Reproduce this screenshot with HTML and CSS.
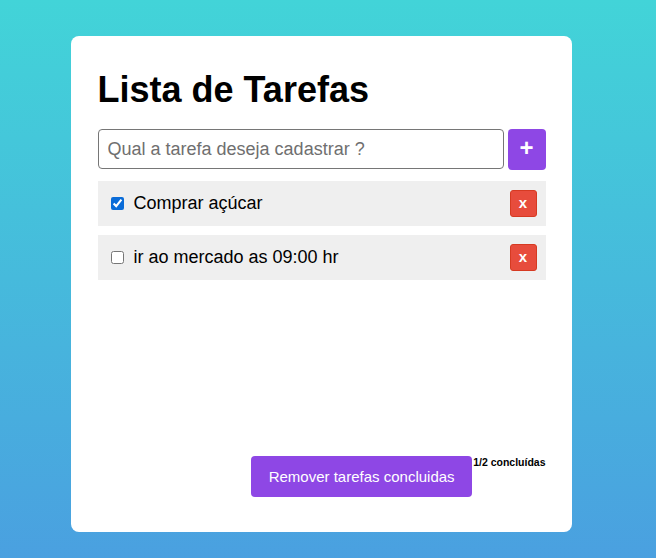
FILE: index.html
```html
<!DOCTYPE html>
<html lang="pt-BR">
<head>
<meta charset="utf-8">
<title>Lista de Tarefas</title>
<link rel="stylesheet" href="styles.css">
</head>
<body>
<main class="card">
  <h1 class="title">Lista de Tarefas</h1>
  <form class="new-task">
    <input class="task-input" type="text" placeholder="Qual a tarefa deseja cadastrar ?">
    <button class="add-btn" type="button">+</button>
  </form>
  <ul class="tasks">
    <li class="task">
      <label class="task-label"><input type="checkbox" class="task-check" checked><span>Comprar açúcar</span></label>
      <button class="del-btn" type="button">x</button>
    </li>
    <li class="task">
      <label class="task-label"><input type="checkbox" class="task-check"><span>ir ao mercado as 09:00 hr</span></label>
      <button class="del-btn" type="button">x</button>
    </li>
  </ul>
  <footer class="footer">
    <button class="clear-btn" type="button">Remover tarefas concluidas</button>
    <span class="count">1/2 concluídas</span>
  </footer>
</main>
</body>
</html>
```
FILE: styles.css
```css
* { box-sizing: border-box; }
html, body { height: 100%; }
body {
  margin: 0;
  font-family: "Liberation Sans", Arial, sans-serif;
  background: linear-gradient(180deg, #42d4d8 0%, #4aa0e0 100%);
  display: flex;
  justify-content: center;
  align-items: flex-start;
  padding: 36px 14px 0 0;
}
.card {
  width: 501px;
  height: 496px;
  background: #fff;
  border-radius: 8px;
  padding: 32px 26px 35px 27px;
  display: flex;
  flex-direction: column;
}
.title {
  margin: 0 0 17px;
  font-size: 36px;
  line-height: 44px;
  font-weight: bold;
  color: #000;
}
.new-task {
  display: flex;
  gap: 4px;
  margin: 0 0 11px;
}
.task-input {
  flex: 1;
  height: 40px;
  border: 1px solid #767676;
  border-radius: 4px;
  padding: 0 9px;
  font-family: inherit;
  font-size: 18px;
  color: #000;
}
.task-input::placeholder { color: #6f6f6f; }
.add-btn {
  width: 38px;
  height: 41px;
  border: none;
  border-radius: 4px;
  background: #8e47e5;
  color: #fff;
  font-family: inherit;
  font-size: 24px;
  font-weight: bold;
  line-height: 1;
  padding: 0 0 3px;
}
.tasks {
  list-style: none;
  margin: 0;
  padding: 0;
  flex: 1;
  display: flex;
  flex-direction: column;
  gap: 9px;
}
.task {
  height: 45px;
  background: #efefef;
  display: flex;
  align-items: center;
  justify-content: space-between;
  padding: 0 9px 0 13px;
}
.task-label {
  display: flex;
  align-items: center;
  gap: 10px;
  font-size: 18px;
  color: #000;
}
.task-check {
  margin: 0;
  width: 13px;
  height: 13px;
  accent-color: #0a6cd8;
}
.del-btn {
  width: 27px;
  height: 27px;
  border: 1px solid #d63a22;
  border-radius: 3px;
  background: #e74c3c;
  color: #fff;
  font-family: inherit;
  font-size: 15px;
  font-weight: bold;
  line-height: 1;
  padding: 0 0 3px;
}
.footer {
  display: flex;
  justify-content: flex-end;
  align-items: flex-start;
}
.clear-btn {
  width: 221px;
  height: 41px;
  border: none;
  border-radius: 4px;
  background: #8e47e5;
  color: #fff;
  font-family: inherit;
  font-size: 15px;
  padding: 0;
}
.count {
  font-size: 10.5px;
  font-weight: bold;
  color: #000;
  margin-left: 1px;
  line-height: 12px;
}
```
